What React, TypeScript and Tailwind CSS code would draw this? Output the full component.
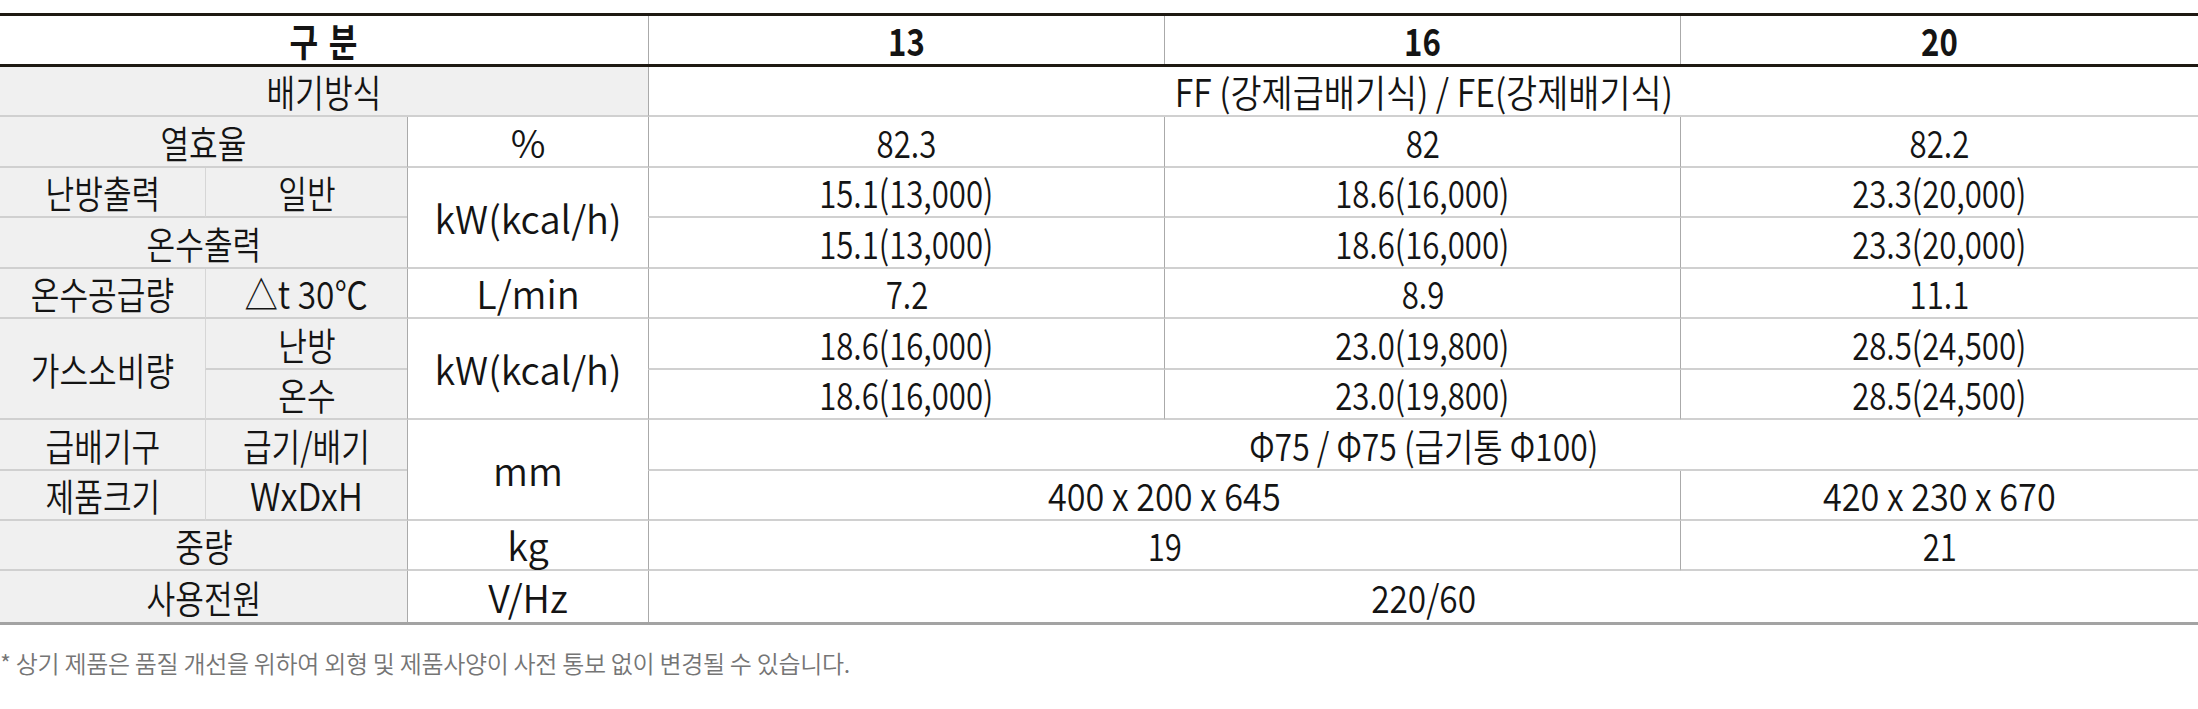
import React from "react";

const K = "scale-x-[0.82]"; // korean / numbers
const NONE = "";

type CellProps = {
  children?: React.ReactNode;
  cls: string;
  s?: string;
};

function Cell({ children, cls, s = K }: CellProps) {
  return (
    <div className={`flex items-center justify-center ${cls}`}>
      <span className={`inline-block whitespace-nowrap leading-[1.25] ${s}`}>{children}</span>
    </div>
  );
}

// border helpers (full class strings)
const G = "bg-[#f0f0f0] border-b-2 border-[#d0d0d0]";
const GL = "bg-[#f0f0f0] border-b-2 border-l border-b-[#d0d0d0] border-l-[#d6d6d6]";
const W = "bg-white border-b-2 border-l border-b-[#d0d0d0] border-l-[#aaaaaa]";
const GLast = "bg-[#f0f0f0]";
const WLast = "bg-white border-l border-l-[#aaaaaa]";

export default function App() {
  return (
    <div className="w-[2198px] bg-white pt-[13px] font-['Noto_Sans_CJK_KR','Noto_Sans',sans-serif] font-[350] text-[#141414]">
      {/* header */}
      <div className="grid h-[54px] grid-cols-[648px_516px_516px_518px] border-y-[3px] border-[#1e1912] text-[38px] font-bold">
        <Cell cls="" s="scale-x-[0.82] tracking-[2px]">구 분</Cell>
        <Cell cls="border-l border-[#aaaaaa]">13</Cell>
        <Cell cls="border-l border-[#aaaaaa]">16</Cell>
        <Cell cls="border-l border-[#aaaaaa]">20</Cell>
      </div>

      {/* body */}
      <div className="grid grid-cols-[205px_202px_241px_516px_516px_518px] grid-rows-[repeat(11,50.45px)] border-b-[3px] border-[#a3a3a3] text-[38px]">
        {/* 1 */}
        <Cell cls={`col-span-3 ${G}`}>배기방식</Cell>
        <Cell cls={`col-span-3 ${W}`} s="scale-x-[0.89]">FF (강제급배기식) / FE(강제배기식)</Cell>

        {/* 2 */}
        <Cell cls={`col-span-2 ${G}`}>열효율</Cell>
        <Cell cls={W} s={NONE}>%</Cell>
        <Cell cls={W}>82.3</Cell>
        <Cell cls={W}>82</Cell>
        <Cell cls={W}>82.2</Cell>

        {/* 3 */}
        <Cell cls={G}>난방출력</Cell>
        <Cell cls={GL}>일반</Cell>
        <Cell cls={`row-span-2 ${W}`} s={NONE}>kW(kcal/h)</Cell>
        <Cell cls={W}>15.1(13,000)</Cell>
        <Cell cls={W}>18.6(16,000)</Cell>
        <Cell cls={W}>23.3(20,000)</Cell>

        {/* 4 */}
        <Cell cls={`col-span-2 ${G}`}>온수출력</Cell>
        <Cell cls={W}>15.1(13,000)</Cell>
        <Cell cls={W}>18.6(16,000)</Cell>
        <Cell cls={W}>23.3(20,000)</Cell>

        {/* 5 */}
        <Cell cls={G}>온수공급량</Cell>
        <Cell cls={GL} s="scale-x-[0.88]">△t 30℃</Cell>
        <Cell cls={W} s={NONE}>L/min</Cell>
        <Cell cls={W}>7.2</Cell>
        <Cell cls={W}>8.9</Cell>
        <Cell cls={W}>11.1</Cell>

        {/* 6 */}
        <Cell cls={`row-span-2 ${G}`}>가스소비량</Cell>
        <Cell cls={GL}>난방</Cell>
        <Cell cls={`row-span-2 ${W}`} s={NONE}>kW(kcal/h)</Cell>
        <Cell cls={W}>18.6(16,000)</Cell>
        <Cell cls={W}>23.0(19,800)</Cell>
        <Cell cls={W}>28.5(24,500)</Cell>

        {/* 7 */}
        <Cell cls={GL}>온수</Cell>
        <Cell cls={W}>18.6(16,000)</Cell>
        <Cell cls={W}>23.0(19,800)</Cell>
        <Cell cls={W}>28.5(24,500)</Cell>

        {/* 8 */}
        <Cell cls={G}>급배기구</Cell>
        <Cell cls={GL}>급기/배기</Cell>
        <Cell cls={`row-span-2 ${W}`} s={NONE}>mm</Cell>
        <Cell cls={`col-span-3 ${W}`} s="scale-x-[0.84]">Φ75 / Φ75 (급기통 Φ100)</Cell>

        {/* 9 */}
        <Cell cls={G}>제품크기</Cell>
        <Cell cls={GL} s="scale-x-[0.92]">WxDxH</Cell>
        <Cell cls={`col-span-2 ${W}`} s="scale-x-[0.9]">400 x 200 x 645</Cell>
        <Cell cls={W} s="scale-x-[0.9]">420 x 230 x 670</Cell>

        {/* 10 */}
        <Cell cls={`col-span-2 ${G}`}>중량</Cell>
        <Cell cls={W} s={NONE}>kg</Cell>
        <Cell cls={`col-span-2 ${W}`}>19</Cell>
        <Cell cls={W}>21</Cell>

        {/* 11 */}
        <Cell cls={`col-span-2 ${GLast}`}>사용전원</Cell>
        <Cell cls={WLast} s={NONE}>V/Hz</Cell>
        <Cell cls={`col-span-3 ${WLast}`} s="scale-x-[0.88]">220/60</Cell>
      </div>

      <p className="mt-[20px] pb-[30px] text-[24px] leading-[36px] tracking-[-0.3px] text-[#757575]">
        * 상기 제품은 품질 개선을 위하여 외형 및 제품사양이 사전 통보 없이 변경될 수 있습니다.
      </p>
    </div>
  );
}
